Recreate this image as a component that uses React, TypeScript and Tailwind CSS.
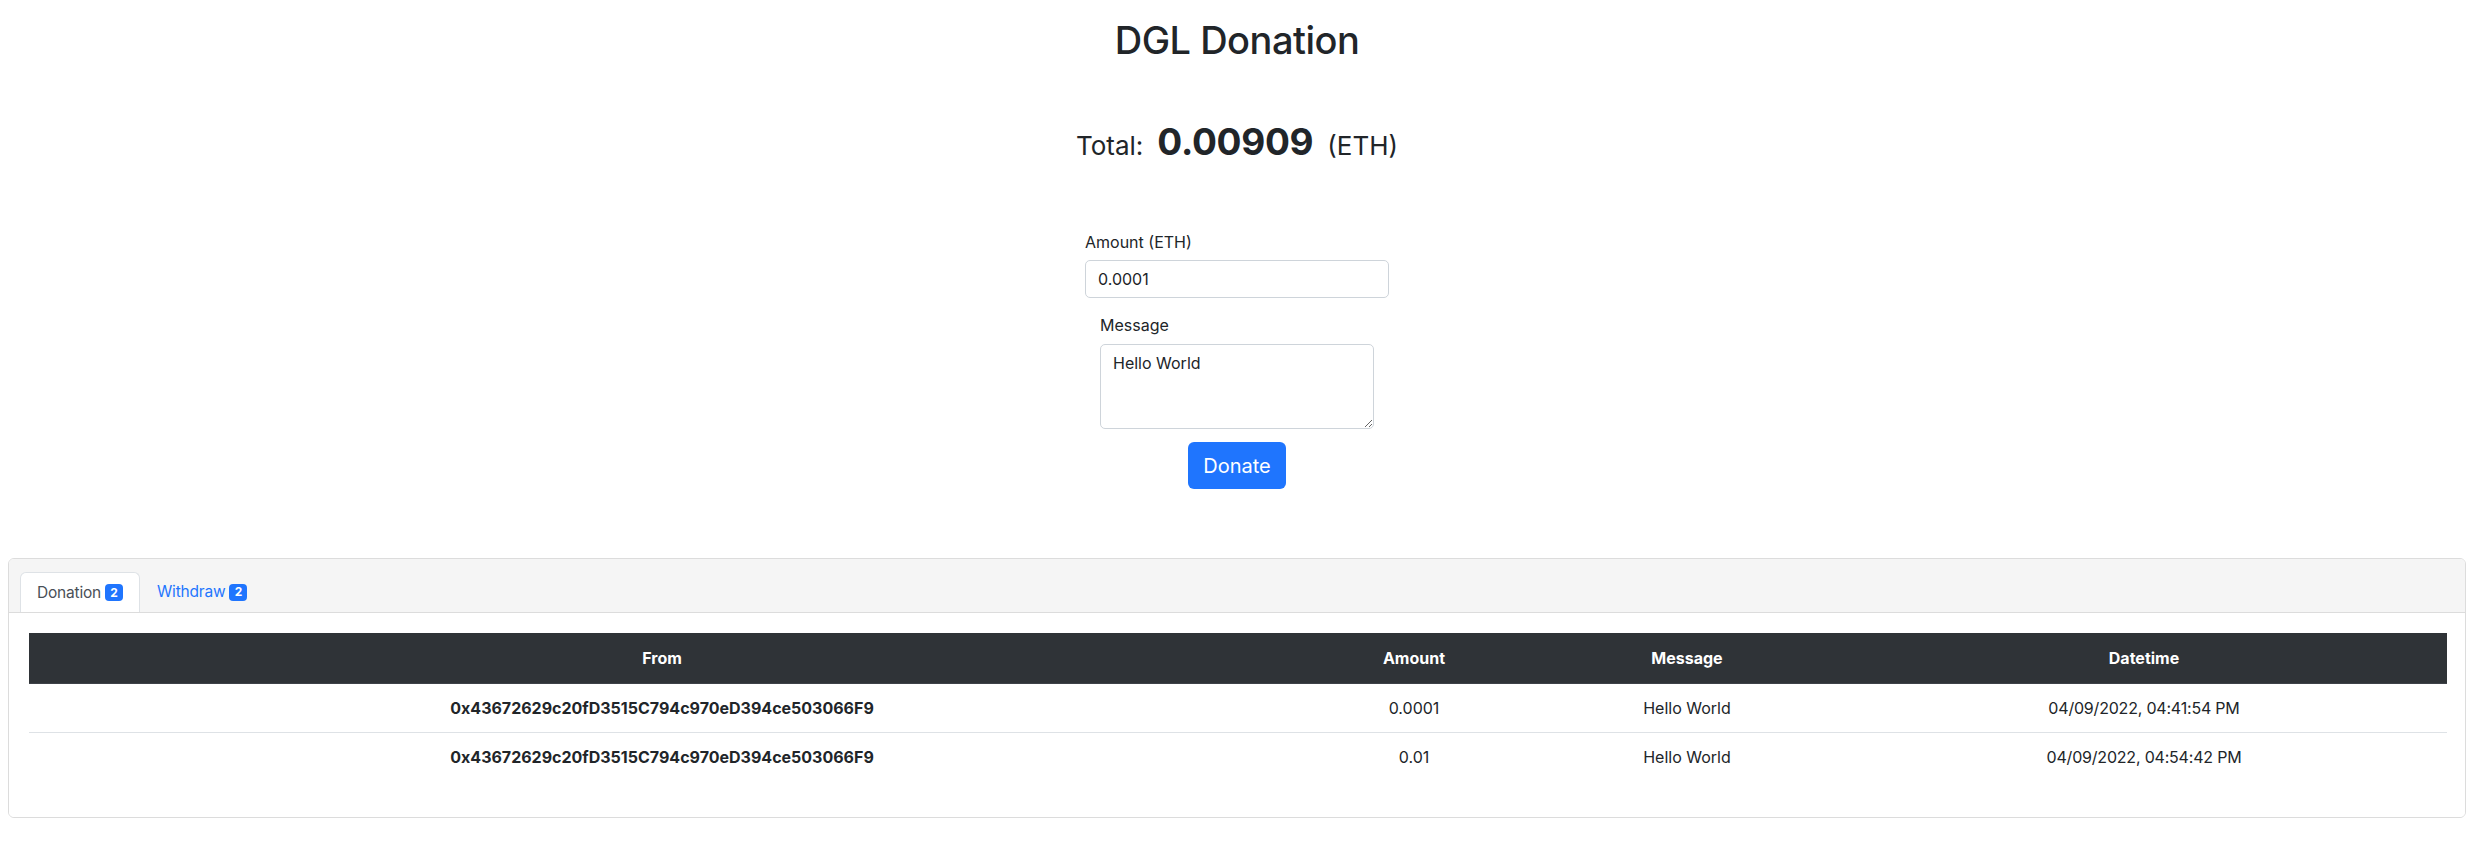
const rows = [
  {
    from: "0x43672629c20fD3515C794c970eD394ce503066F9",
    amount: "0.0001",
    message: "Hello World",
    datetime: "04/09/2022, 04:41:54 PM",
  },
  {
    from: "0x43672629c20fD3515C794c970eD394ce503066F9",
    amount: "0.01",
    message: "Hello World",
    datetime: "04/09/2022, 04:54:42 PM",
  },
];

function Badge({ n }: { n: number }) {
  return (
    <span className="ml-[4px] inline-flex h-[17px] w-[18px] items-center justify-center rounded-[4px] bg-[#1f75fe] text-[12px] font-bold leading-none text-white">
      {n}
    </span>
  );
}

function DonationTable() {
  return (
    <table className="mb-4 w-[2418px] table-fixed border-collapse text-center text-[16px] leading-6">
      <colgroup>
        <col className="w-[1266px]" />
        <col className="w-[238px]" />
        <col className="w-[308px]" />
        <col className="w-[606px]" />
      </colgroup>
      <thead>
        <tr className="h-[50px] border-b border-[#3e4248] bg-[#2f3337] text-white">
          <th className="px-2 py-3 font-bold">From</th>
          <th className="px-2 py-3 font-bold">Amount</th>
          <th className="px-2 py-3 font-bold">Message</th>
          <th className="px-2 py-3 font-bold">Datetime</th>
        </tr>
      </thead>
      <tbody>
        {rows.map((r, i) => (
          <tr
            key={i}
            className={
              "h-[49px]" +
              (i < rows.length - 1 ? " border-b border-[#dee2e6]" : "")
            }
          >
            <td className="px-2 py-3 font-bold">{r.from}</td>
            <td className="px-2 py-3">{r.amount}</td>
            <td className="px-2 py-3">{r.message}</td>
            <td className="px-2 py-3 tracking-[-0.2px]">{r.datetime}</td>
          </tr>
        ))}
      </tbody>
    </table>
  );
}

export default function App() {
  return (
    <div className="min-h-screen bg-white font-['Inter','Noto_Sans',sans-serif] text-[#212529]">
      <div className="mr-[16px] pt-[16px]">
        <h1 className="text-center text-[38px] font-medium leading-[48px] tracking-[-0.5px]">
          DGL Donation
        </h1>

        <div className="mt-[50px] flex h-[48px] items-baseline justify-center">
          <span className="text-[26px]">Total:</span>
          <span className="ml-[14px] text-[37px] font-bold tracking-[-0.3px]">0.00909</span>
          <span className="ml-[14px] text-[26px]">(ETH)</span>
        </div>

        <form className="mx-auto mt-[68px] w-[304px] text-left">
          <label className="block text-[16px] leading-6">Amount (ETH)</label>
          <input
            type="text"
            defaultValue="0.0001"
            className="mt-[6px] block h-[38px] w-full rounded-[5px] border border-[#ced4da] px-3 text-[16px] text-[#212529] outline-none"
          />
          <div className="px-[15px]">
            <label className="mt-[15px] block text-[16px] leading-6">Message</label>
            <textarea
              defaultValue="Hello World"
              className="mt-[7px] block h-[85px] w-full rounded-[5px] border border-[#ced4da] px-3 py-[6px] text-[16px] leading-6 text-[#212529] outline-none"
            />
          </div>
          <div className="mt-[13px] flex justify-center">
            <button
              type="button"
              className="h-[47px] w-[98px] rounded-[6px] bg-[#1f75fe] text-[20px] text-white"
            >
              Donate
            </button>
          </div>
        </form>

        <div className="mx-[8px] mt-[69px] overflow-hidden rounded-[6px] border border-[#dcdcdc]">
          <div className="flex border-b border-[#dcdcdc] bg-[#f5f5f5] px-[11px] pt-[13px]">
            <div className="-mb-px flex h-[40px] items-center rounded-t-[6px] border border-b-0 border-[#dee2e6] bg-white px-4 text-[15.5px] tracking-[-0.2px] text-[#495057]">
              Donation
              <Badge n={2} />
            </div>
            <div className="flex h-[40px] items-center border border-transparent px-4 text-[15.5px] tracking-[-0.2px] text-[#1f75fe]">
              Withdraw
              <Badge n={2} />
            </div>
          </div>
          <div className="bg-white px-[20px] pt-[20px] pb-[20px]">
            <DonationTable />
          </div>
        </div>
      </div>
    </div>
  );
}
